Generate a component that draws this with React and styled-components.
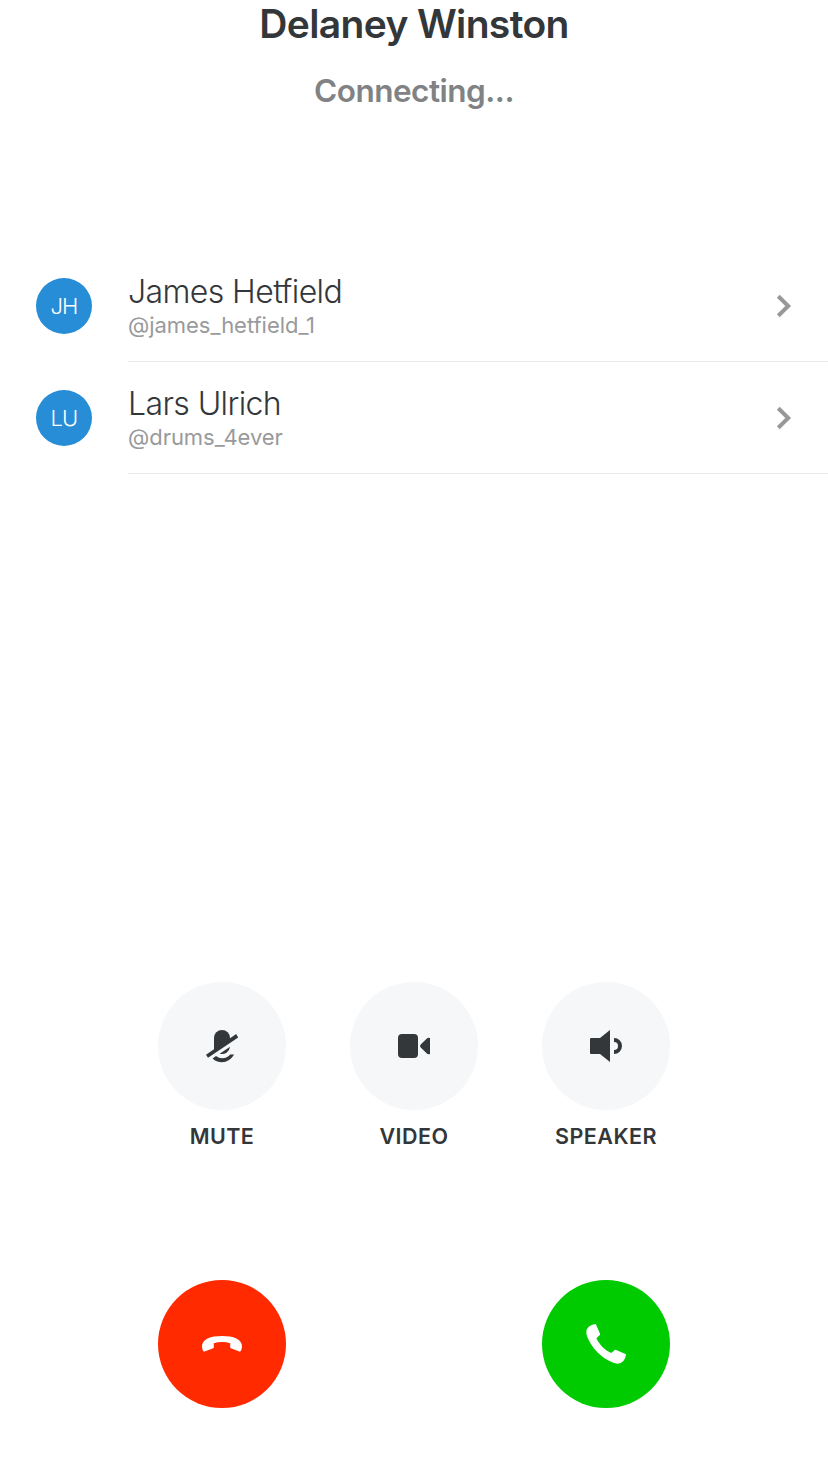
import React from "react";
import styled, { createGlobalStyle } from "styled-components";

const GlobalStyle = createGlobalStyle`
  *, *::before, *::after { box-sizing: border-box; }
  body { margin: 0; background: #fff; font-family: Inter, "Liberation Sans", sans-serif; -webkit-font-smoothing: antialiased; }
`;

const Screen = styled.main`
  display: flex;
  flex-direction: column;
  width: 828px;
  height: 1472px;
  overflow: hidden;
  background: #fff;
  color: #33373a;
`;

const Header = styled.header`
  display: flex;
  flex-direction: column;
  align-items: center;
  height: 250px;
`;

const Caller = styled.h1`
  margin: 0;
  font-size: 39px;
  font-weight: 600;
  line-height: 47px;
  letter-spacing: -0.64px;
`;

const Status = styled.p`
  margin: 23px 0 0;
  font-size: 31.5px;
  font-weight: 600;
  line-height: 41px;
  letter-spacing: -0.5px;
  color: #808284;
`;

const ContactList = styled.ul`
  margin: 0;
  padding: 0 0 0 36px;
  list-style: none;
`;

const Contact = styled.li`
  display: flex;
  align-items: center;
  gap: 36px;
  height: 112px;
`;

const Avatar = styled.span`
  display: flex;
  align-items: center;
  justify-content: center;
  flex: none;
  width: 56px;
  height: 56px;
  border-radius: 50%;
  background: #268dd6;
  color: #fff;
  font-size: 22px;
  font-weight: 300;
  letter-spacing: -0.9px;
`;

const ContactBody = styled.div`
  display: flex;
  align-items: center;
  justify-content: space-between;
  flex: 1;
  height: 112px;
  padding-right: 24px;
  border-bottom: 1px solid #ebebec;
`;

const Name = styled.div`
  font-size: 32px;
  font-weight: 300;
  line-height: 40px;
  letter-spacing: -0.6px;
`;

const Handle = styled.div`
  margin: -1px 0 1px;
  font-size: 22px;
  line-height: 28px;
  letter-spacing: -0.04px;
  color: #999a9b;
`;

const Controls = styled.section`
  display: flex;
  justify-content: center;
  gap: 64px;
  margin-top: 508px;
`;

const Control = styled.div`
  display: flex;
  flex-direction: column;
  align-items: center;
  width: 128px;
`;

const RoundButton = styled.button`
  display: flex;
  align-items: center;
  justify-content: center;
  width: 128px;
  height: 128px;
  padding: 0;
  border: 0;
  border-radius: 50%;
  background: ${(p) => p.$color};
  color: ${(p) => p.$ink || "#fff"};
`;

const Label = styled.span`
  margin: 11px 0 1px;
  font-size: 21.5px;
  font-weight: 600;
  line-height: 30px;
  letter-spacing: 0.45px;
`;

const CallActions = styled.footer`
  display: flex;
  justify-content: space-between;
  margin: 128px 158px 0;
`;

const Glyph = styled.svg`
  display: block;
  width: 64px;
  height: 64px;
  fill: currentColor;
`;

const Chevron = styled.svg`
  width: 40px;
  height: 48px;
  fill: none;
  stroke: #989898;
  stroke-width: 4;
`;

const MuteIcon = () => (
  <Glyph viewBox="0 0 64 64">
    <path d="M24 37.5V24a8 8 0 0 1 16 0V26.5Z" />
    <path d="M16 40.7 46.2 20 48.2 23.4 18 43.8Z" />
    <path d="M29.7 39.7 40 32.7A8 8 0 0 1 29.7 39.7Z" />
    <path d="M22.6 44.4 26 42Q29 44.2 32 44.2Q37.6 44.2 40.2 40.6H44.2Q39.5 48.2 32 48.2Q26.3 48.2 22.6 44.4Z" />
  </Glyph>
);

const VideoIcon = () => (
  <Glyph viewBox="0 0 64 64">
    <rect x="16" y="20" width="20" height="24" rx="4" />
    <path d="M38.7 30.6 44.6 24.7Q46 23.4 48 24V40Q46 40.6 44.6 39.3L38.7 33.4Q37.3 32 38.7 30.6Z" />
  </Glyph>
);

const SpeakerIcon = () => (
  <Glyph viewBox="0 0 64 64">
    <path d="M17 24H26L36 16V48L26 40H17Q16 40 16 39V25Q16 24 17 24Z" />
    <path d="M40 24A8 8 0 0 1 40 40V36A4 4 0 0 0 40 28Z" />
  </Glyph>
);

const HangUpIcon = () => (
  <Glyph viewBox="0 0 64 64">
    <path d="M12 35C11.4 27 21 24 32 24S52.6 27 52 35Q51.8 38.3 50 39.8L40.8 36.2Q40 35.7 40.1 34.8L40.3 31.2Q36.5 30 32 30T23.7 31.2L23.9 34.8Q24 35.7 23.2 36.2L14 39.8Q12.2 38.3 12 35Z" />
  </Glyph>
);

const AnswerIcon = () => (
  <Glyph viewBox="0 0 64 64">
    <path d="M21.8 12 26 21.8Q26.3 22.6 25.6 23.3L22.4 26.2C25.5 32.7 30.6 37.9 37.3 41.1L40.7 38Q41.3 37.5 42.2 37.9L52 42.2Q51.7 46.5 49.4 49Q45.5 53.5 38.7 50.6C27.3 45.6 18.5 37.3 13.4 25.2Q10.5 18.5 15 14.5Q17.8 12.2 21.8 12Z" />
  </Glyph>
);

const contacts = [
  { initials: "JH", name: "James Hetfield", handle: "@james_hetfield_1" },
  { initials: "LU", name: "Lars Ulrich", handle: "@drums_4ever" },
];

const controls = [
  { label: "MUTE", Icon: MuteIcon },
  { label: "VIDEO", Icon: VideoIcon },
  { label: "SPEAKER", Icon: SpeakerIcon },
];

export default function App() {
  return (
    <>
      <GlobalStyle />
      <Screen>
        <Header>
          <Caller>Delaney Winston</Caller>
          <Status>Connecting...</Status>
        </Header>
        <ContactList>
          {contacts.map((c) => (
            <Contact key={c.handle}>
              <Avatar>{c.initials}</Avatar>
              <ContactBody>
                <div>
                  <Name>{c.name}</Name>
                  <Handle>{c.handle}</Handle>
                </div>
                <Chevron viewBox="0 0 40 48">
                  <path d="M14.3 14.3 24.2 24 14.3 33.7" />
                </Chevron>
              </ContactBody>
            </Contact>
          ))}
        </ContactList>
        <Controls>
          {controls.map(({ label, Icon }) => (
            <Control key={label}>
              <RoundButton $color="#f6f7f9" $ink="#33373a" aria-label={label}>
                <Icon />
              </RoundButton>
              <Label>{label}</Label>
            </Control>
          ))}
        </Controls>
        <CallActions>
          <RoundButton $color="#ff2a00" aria-label="Decline">
            <HangUpIcon />
          </RoundButton>
          <RoundButton $color="#00ca00" aria-label="Answer">
            <AnswerIcon />
          </RoundButton>
        </CallActions>
      </Screen>
    </>
  );
}
